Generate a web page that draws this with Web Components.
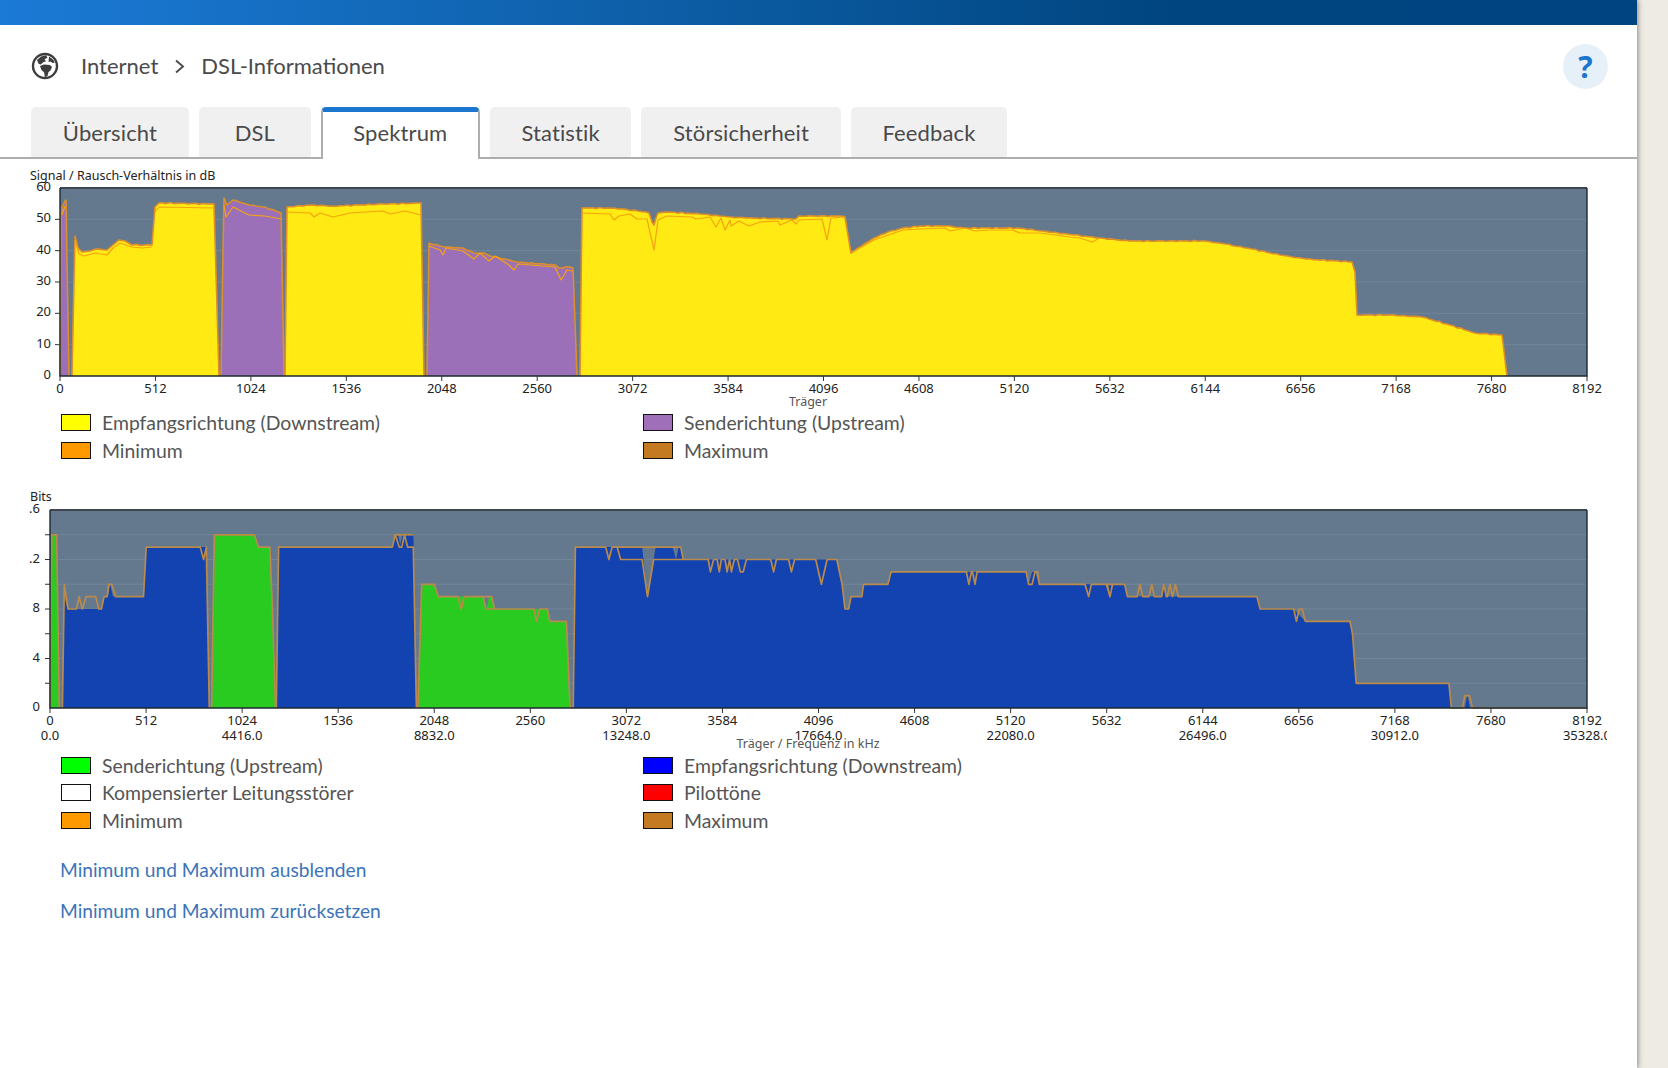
<!DOCTYPE html>
<html lang="de">
<head>
<meta charset="utf-8">
<title>DSL-Informationen</title>
<style>
  html, body { margin: 0; height: 100%; background: #eeebe4; overflow: hidden; }
  body { font-family: "Noto Sans", "Open Sans", sans-serif; }
  #snr-legend { margin-top: 5px; }
  #bits { margin-top: 28px; }
  #bits-legend { margin-top: 4.5px; }
</style>
</head>
<body>
<dsl-page>
  <dsl-header slot="header" current="DSL-Informationen" parent="Internet"></dsl-header>
  <dsl-tabs slot="tabs" active="Spektrum" items="Übersicht,DSL,Spektrum,Statistik,Störsicherheit,Feedback"></dsl-tabs>
  <spectrum-chart id="snr" title-text="Signal / Rausch-Verhältnis in dB" axis-label="Träger"></spectrum-chart>
  <chart-legend id="snr-legend"></chart-legend>
  <spectrum-chart id="bits" title-text="Bits" axis-label="Träger / Frequenz in kHz"></spectrum-chart>
  <chart-legend id="bits-legend"></chart-legend>
  <dsl-links>
    <a>Minimum und Maximum ausblenden</a>
    <a>Minimum und Maximum zurücksetzen</a>
  </dsl-links>
</dsl-page>

<script>
const FONT = `"Noto Sans", "Open Sans", sans-serif`;
const UI_FONT = `Lato, "Noto Sans", sans-serif`;

class DslPage extends HTMLElement {
  constructor() {
    super();
    this.attachShadow({ mode: "open" });
    this.shadowRoot.innerHTML = `
      <style>
        :host { display: block; width: 1637px; height: 1068px; background: #fff; box-shadow: 1px 0 5px rgba(60, 55, 45, 0.55); overflow: hidden; font-variant-ligatures: none; }
        .bar { height: 25px; background: linear-gradient(90deg, #1b7ad6 0%, #0f62ad 35%, #00457f 72%, #004582 100%); }
      </style>
      <div class="bar"></div>
      <slot name="header"></slot>
      <slot name="tabs"></slot>
      <slot></slot>
    `;
  }
}

class DslHeader extends HTMLElement {
  constructor() {
    super();
    this.attachShadow({ mode: "open" });
  }
  connectedCallback() {
    this.shadowRoot.innerHTML = `
      <style>
        :host { display: flex; align-items: center; height: 82px; padding: 0 29px 0 31px; font: 22px ${UI_FONT}; color: #4a4a4a; }
        svg { width: 28px; height: 28px; flex: none; }
        .crumb { margin-left: 22px; position: relative; top: -1px; }
        .sep { width: 11px; height: 15px; margin: 0 16px 0 16px; flex: none; }
        .help { margin-left: auto; width: 45px; height: 45px; border-radius: 50%; background: #e6f0f9; color: #1b76ce; display: flex; align-items: center; justify-content: center; font: 700 30px ${FONT}; }
      </style>
      <svg viewBox="0 0 28 28">
        <circle cx="14" cy="14" r="12" fill="#fff" stroke="#3e3e3e" stroke-width="2.4"/>
        <path fill="#3e3e3e" d="M6 8 10 4.5l5-1.2 1.5 2.4-3 1.6 1.5 2-2.8 1-2.4 2.2-2.3-.8zM18 4.5l4 3 2 3-2.5.6-2-1.6-2 .5zM9 14l4-1.5 6 .5 2 2-1.5 3.5-2 1.5-1 4-2.5 1.2-1-5-2.6-2.2z"/>
      </svg>
      <span class="crumb">${this.getAttribute("parent")}</span>
      <svg class="sep" viewBox="0 0 11 15"><path d="M2 1.5 9 7.5l-7 6" fill="none" stroke="#4a4a4a" stroke-width="1.9"/></svg>
      <span class="crumb" style="margin:0">${this.getAttribute("current")}</span>
      <span class="help">?</span>
    `;
  }
}

class DslTabs extends HTMLElement {
  constructor() {
    super();
    this.attachShadow({ mode: "open" });
  }
  connectedCallback() {
    const active = this.getAttribute("active");
    const tabs = this.getAttribute("items").split(",").map((label) =>
      `<div class="tab${label === active ? " on" : ""}">${label}</div>`).join("");
    this.shadowRoot.innerHTML = `
      <style>
        :host { display: flex; gap: 10px; height: 50px; padding-left: 31px; border-bottom: 2px solid #adadad; box-sizing: content-box; font: 22px ${UI_FONT}; letter-spacing: 0.12px; color: #4a4a4a; }
        .tab { height: 50px; min-width: 112px; padding: 0 31.8px; display: flex; align-items: center; justify-content: center; background: #f0f0f1; border-radius: 5px 5px 0 0; box-sizing: border-box; }
        .on { background: #fff; border-top: 5px solid #1b76ce; border-left: 2px solid #adadad; border-right: 2px solid #adadad; height: 52px; padding: 0 30.4px 7px; position: relative; }
      </style>
      ${tabs}
    `;
  }
}

// one plot: axes and labels come from config(), curves are drawn in page pixels relative to the plot
class SpectrumChart extends HTMLElement {
  constructor() {
    super();
    this.attachShadow({ mode: "open" });
  }

  draw(cfg) {
    const { width, height, left, top, plotW, plotH, yTicks, yMax, minorStep, freq, yLabelX } = cfg;
    const py = (v) => top + plotH - (v / yMax) * plotH;
    let grid = "";
    for (let v = minorStep; v < yMax; v += minorStep) {
      grid += `<line x1="${left}" x2="${left + plotW}" y1="${py(v)}" y2="${py(v)}" stroke="#72859a" stroke-width="1"/>`;
      grid += `<line x1="${left - 5}" x2="${left}" y1="${py(v)}" y2="${py(v)}" stroke="#333"/>`;
    }
    const ylabels = yTicks.map(([v, t]) =>
      `<text x="${yLabelX}" y="${py(v) + 3}" text-anchor="end">${t}</text>`).join("");
    let xlabels = "";
    let xticks = "";
    for (let i = 0; i <= 16; i++) {
      const x = left + (plotW * i) / 16;
      xticks += `<line x1="${x}" x2="${x}" y1="${top + plotH}" y2="${top + plotH + 5}" stroke="#333"/>`;
      xlabels += `<text x="${x}" y="${top + plotH + 17}" text-anchor="middle">${i * 512}</text>`;
      if (freq && i % 2 === 0) {
        xlabels += `<text x="${x}" y="${top + plotH + 32}" text-anchor="middle">${(i * 2208).toFixed(1)}</text>`;
      }
    }
    const fills = cfg.fills.map(([color, pts]) =>
      `<polygon points="${pts.map((p) => p.join(",")).join(" ")}" fill="${color}"/>`).join("");
    const lines = cfg.lines.map(([color, w, pts]) =>
      `<polyline points="${pts.map((p) => p.join(",")).join(" ")}" fill="none" stroke="${color}" stroke-width="${w}" stroke-linejoin="round"/>`).join("");

    this.shadowRoot.innerHTML = `
      <style>
        :host { display: block; height: ${height}px; }
        svg { display: block; overflow: hidden; }
        text { font: 13px ${FONT}; fill: #222; }
        .title { font-size: 12.5px; }
        .axis { font-size: 12.5px; fill: #555; }
      </style>
      <svg width="${width}" height="${height}" viewBox="0 0 ${width} ${height}">
        <text class="title" x="30" y="${cfg.titleY}">${this.getAttribute("title-text")}</text>
        <rect x="${left}" y="${top}" width="${plotW}" height="${plotH}" fill="#65798e"/>
        ${grid}
        <g>${fills}${lines}</g>
        <path d="M${left} ${top}H${left + plotW}" stroke="#3f4650" stroke-width="2" fill="none"/>
        <path d="M${left} ${top}V${top + plotH}H${left + plotW}V${top}" stroke="#1c2a30" stroke-width="1.4" fill="none"/>
        ${xticks}
        ${ylabels}
        ${xlabels}
        <text class="axis" x="808" y="${cfg.axisY}" text-anchor="middle">${this.getAttribute("axis-label")}</text>
      </svg>
    `;
  }
}

class ChartLegend extends HTMLElement {
  constructor() {
    super();
    this.attachShadow({ mode: "open" });
  }
  set items(list) {
    this.shadowRoot.innerHTML = `
      <style>
        :host { display: grid; grid-template-columns: 582px 1fr; row-gap: 10px; padding-left: 61px; font: 19.4px ${UI_FONT}; color: #555; }
        .row { display: flex; align-items: center; height: 17.5px; gap: 11px; }
        i { width: 28px; height: 15px; border: 1px solid #111; flex: none; }
      </style>
      ${list.map(([color, label]) => `<div class="row"><i style="background:${color}"></i><span>${label}</span></div>`).join("")}
    `;
  }
}

class DslLinks extends HTMLElement {
  constructor() {
    super();
    this.attachShadow({ mode: "open" });
    this.shadowRoot.innerHTML = `
      <style>
        :host { display: flex; flex-direction: column; gap: 14px; padding: 27px 0 0 60px; font: 19.2px ${UI_FONT}; color: #3b74b8; }
        ::slotted(a) { display: block; height: 27px; line-height: 27px; color: #3b74b8; }
      </style>
      <slot></slot>
    `;
  }
}

customElements.define("dsl-page", DslPage);
customElements.define("dsl-header", DslHeader);
customElements.define("dsl-tabs", DslTabs);
customElements.define("spectrum-chart", SpectrumChart);
customElements.define("chart-legend", ChartLegend);
customElements.define("dsl-links", DslLinks);

// measured curves are noisy, so long flat stretches get a small fixed wobble
function rough(pts, amount = 0.6) {
  const out = [];
  pts.forEach(([x, y], i) => {
    out.push([x, y]);
    const next = pts[i + 1];
    if (!next) return;
    const dx = next[0] - x;
    if (dx < 8 || Math.abs(next[1] - y) > dx) return;
    const steps = Math.floor(dx / 3.5);
    for (let s = 1; s < steps; s++) {
      const px = x + (dx * s) / steps;
      const wobble = Math.sin(px * 0.73) * Math.sin(px * 0.19 + 1) * amount;
      out.push([+px.toFixed(1), +(y + ((next[1] - y) * s) / steps + wobble).toFixed(1)]);
    }
  });
  return out;
}

// --- curve data, traced from the reference. First chart: [x, y] in page pixels ---
const CHART1_TOP = 159; // page y of the first chart's svg
const YELLOW = "#ffea14", PURPLE = "#9c70b8";
const snrShift = (pts) => pts.map(([x, y]) => [x, y - CHART1_TOP]);

const snrSegments = [
  [PURPLE, [[60,376],[61,215],[62,207],[65,201],[66,200],[67,260],[69,376]]],
  [YELLOW, [[72,376],[74,280],[75,236],[78,248],[82,252],[90,251],[96,249],[107,250],[113,245],[119,240],[125,241],[132,245],[152,245],[155,207],[159,203],[214,204],[219,376]]],
  [PURPLE, [[221,376],[223,250],[224,198],[227,205],[233,200],[249,205],[265,207],[281,213],[284,376]]],
  [YELLOW, [[285,376],[287,207],[310,205],[333,206],[383,204],[421,203],[424,376]]],
  [PURPLE, [[427,376],[429,243],[440,246],[444,247],[463,248],[474,253],[484,253],[490,256],[509,260],[517,262],[555,265],[559,268],[570,267],[573,268],[577,376]]],
  [YELLOW, [[580,376],[582,208],[614,208],[638,211],[646,212],[649,213],[652,222],[654,225],[656,218],[658,213],[667,212],[700,214],[731,217],[746,218],[796,219],[799,216],[842,216],[845,217],[851,253],[862,246],[874,238],[888,232],[903,228],[921,226],[946,226],[964,228],[1017,228],[1042,231],[1074,235],[1100,238],[1129,241],[1205,241],[1225,244],[1252,249],[1280,255],[1306,259],[1352,262],[1355,272],[1357,315],[1390,315],[1422,317],[1450,325],[1475,333],[1502,335],[1507,376]]],
].map(([c, pts]) => [c, rough(pts)]);

const snrMin = [
  [[62,215],[65,206]],
  [[75,240],[79,254],[84,256],[95,253],[107,255],[113,248],[120,243],[132,247],[142,248],[152,247]],
  [[155,212],[159,207],[214,208]],
  [[224,205],[226,217],[233,207],[249,215],[265,216],[281,219]],
  [[287,212],[310,213],[314,217],[320,213],[333,217],[350,213],[365,212],[383,211],[390,214],[405,211],[421,215]],
  [[429,246],[440,250],[443,255],[446,248],[463,251],[474,259],[480,253],[489,261],[495,256],[509,265],[514,270],[518,264],[555,267],[561,280],[567,270],[573,271]],
  [[582,213],[610,214],[614,220],[619,216],[630,214],[637,219],[647,219],[654,250],[658,220],[667,216],[692,217],[696,219],[710,217],[716,227],[721,218],[725,230],[730,220],[731,226],[739,221],[749,226],[760,222],[778,221],[780,225],[792,220],[796,224],[799,220],[822,219],[827,240],[831,218],[845,217]],
  [[851,253],[874,240],[903,230],[920,229],[945,228],[950,231],[965,228],[975,231],[990,230],[1012,230],[1020,233],[1040,233],[1070,237],[1080,238],[1092,242],[1098,239]],
];

document.getElementById("snr").draw({
  width: 1637, height: 250, left: 60, top: 188 - CHART1_TOP, plotW: 1527, plotH: 188,
  yMax: 60, minorStep: 10, yLabelX: 51, titleY: 21, axisY: 247,
  yTicks: [0,10,20,30,40,50,60].map((v) => [v, v]),
  fills: snrSegments.map(([c, p]) => [c, snrShift(p)]),
  lines: [
    ...snrSegments.map(([, p]) => ["#dc8e2c", 1.6, snrShift(p)]),
    ...snrMin.map((p) => ["#f5a30f", 1.2, snrShift(p)]),
  ],
});

document.getElementById("snr-legend").items = [
  ["#ffff00", "Empfangsrichtung (Downstream)"], ["#9f6fb9", "Senderichtung (Upstream)"],
  ["#ff9900", "Minimum"], ["#c47a20", "Maximum"],
];

// Second chart: traced as [raw x, bits]; rx() maps a trace scale onto the page
const CHART2_TOP = 487;
const BLUE = "#1243b0", GREEN = "#29cb20";
const by = (b) => 708 - (b * 198) / 16 - CHART2_TOP;
const trace = (org, scale, pts) => pts.map(([x, b]) => [+(org + x / scale).toFixed(1), +by(b).toFixed(1)]);
const L = (pts) => trace(0, 2.613, pts);
const M = (pts) => trace(560, 2.8, pts);
const R = (pts) => trace(1100, 2.76, pts);

const bitFills = [
  [GREEN, L([[131,0],[135,14],[148,14],[155,0]])],
  [BLUE, [...L([[163,0],[168,9],[176,8],[265,8],[272,9],[282,9],[288,10],[295,9],[375,9],[382,13],[530,13],[539,13],[547,0]])]],
  [GREEN, L([[553,0],[560,14],[665,14],[675,13],[705,13],[712,8],[720,0]])],
  [BLUE, L([[722,0],[728,13],[1027,13],[1033,14],[1040,14],[1046,13.2],[1052,14],[1080,14],[1081,13],[1088,0]])],
  [GREEN, L([[1092,0],[1102,10],[1135,10],[1145,9],[1262,9],[1268,8.4],[1272,8],[1278,9],[1285,9],[1290,8],[1430,8],[1437,7],[1480,7],[1488,0]])],
  [BLUE, [
    ...M([[37,0],[43,13],[230,13],[245,9],[268,13],[315,13],[325,12],[332,13],[338,13],[345,12],[775,12],[790,10],[798,8],[808,8],[815,9],[845,9],[850,10],[918,10],[927,11],[1305,11],[1312,10],[1322,11],[1330,11],[1342,10]]),
    ...R([[68,10],[76,9],[172,9],[177,10],[183,9],[433,9],[442,8],[535,8],[567,7],[690,7],[697,6],[707,2],[963,2],[970,0],[1007,0],[1014,1.1],[1021,0]]),
  ]],
];

const bitLines = [
  L([[131,0],[135,14],[148,14],[155,0]]),
  L([[163,0],[168,10],[178,8],[200,8],[207,9],[215,8],[225,9],[250,9],[258,8],[265,8],[272,9],[280,9],[284,10],[292,10],[302,9],[375,9],[382,13],[523,13],[532,12],[539,13],[547,0]]),
  L([[553,0],[560,14],[665,14],[675,13],[705,13],[712,8],[720,0]]),
  L([[722,0],[728,13],[1025,13],[1033,14],[1043,13],[1050,13],[1057,14],[1065,13],[1080,13],[1088,0]]),
  L([[1030,14],[1080,14]]),
  L([[1092,0],[1102,10],[1135,10],[1145,9],[1197,9],[1205,8],[1213,9],[1262,9],[1270,8],[1290,8],[1395,8],[1402,7],[1410,8],[1430,8],[1437,7],[1480,7],[1490,0]]),
  L([[1262,9],[1285,9],[1292,8]]),
  [
    ...M([[37,0],[43,13],[128,13],[137,12],[146,13],[160,13],[170,12],[230,12],[245,9],[262,12],[345,12],[415,12],[421,11],[430,12],[440,12],[446,11],[452,12],[462,12],[468,11],[475,12],[480,11],[488,12],[497,12],[505,11],[513,11],[522,12],[590,12],[598,11],[606,12],[640,12],[648,11],[657,12],[716,12],[732,10],[748,12],[775,12],[790,10],[798,8],[808,8],[815,9],[845,9],[850,10],[918,10],[927,11],[1138,11],[1145,10],[1152,11],[1155,11],[1162,10],[1168,11],[1305,11],[1312,10],[1322,10],[1330,11],[1337,11],[1342,10],[1470,10],[1480,9],[1488,10],[1530,10],[1540,9],[1547,10]]),
    ...R([[20,10],[27,9],[35,10],[68,10],[76,9],[102,9],[110,10],[118,9],[135,9],[143,10],[150,9],[170,9],[176,10],[183,9],[186,9],[193,10],[200,9],[208,10],[216,9],[433,9],[442,8],[535,8],[542,7],[550,8],[558,8],[567,7],[690,7],[697,6],[707,2],[963,2],[970,0],[1000,0],[1007,1],[1020,1],[1028,0],[1345,0]]),
  ],
  M([[160,13],[338,13],[345,12]]),
];

document.getElementById("bits").draw({
  width: 1607, height: 265, left: 50, top: 510 - CHART2_TOP, plotW: 1537, plotH: 198,
  yMax: 16, minorStep: 2, yLabelX: 40, titleY: 14, axisY: 261, freq: true,
  yTicks: [[0, "0"], [4, "4"], [8, "8"], [12, ".2"], [16, ".6"]],
  fills: bitFills,
  lines: bitLines.map((p) => ["#b98a4c", 1.7, p]),
});

document.getElementById("bits-legend").items = [
  ["#00ff00", "Senderichtung (Upstream)"], ["#0000ff", "Empfangsrichtung (Downstream)"],
  ["#ffffff", "Kompensierter Leitungsstörer"], ["#ff0000", "Pilottöne"],
  ["#ff9900", "Minimum"], ["#c47a20", "Maximum"],
];
</script>
</body>
</html>
